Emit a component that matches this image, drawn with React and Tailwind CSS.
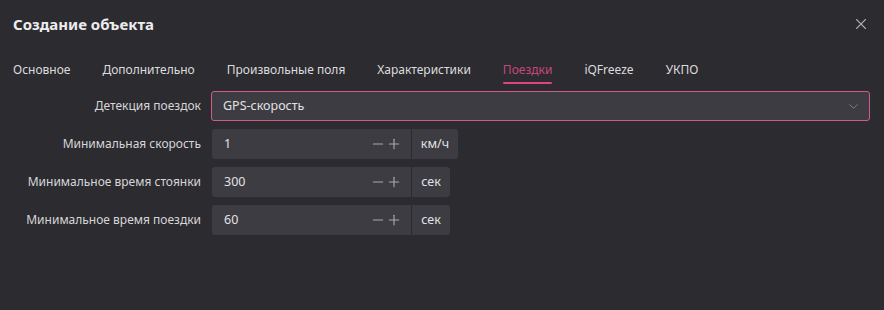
import { X, ChevronDown, Minus, Plus } from "lucide-react";

const tabs = ["Основное", "Дополнительно", "Произвольные поля", "Характеристики", "Поездки", "iQFreeze", "УКПО"];

const NumberRow = ({ label, value, unit, unitWidth }) => (
  <div className="flex items-center h-[30px]">
    <div className="w-[201px] text-right text-[12px] text-[#d6d6d8]">{label}</div>
    <div className="ml-[11px] flex h-[30px] rounded-[3px] bg-[#3d3c42] overflow-hidden">
      <div className="w-[199px] flex items-center pl-[12px] pr-[9px] text-[12.5px] text-[#e2e2e4]">
        <span className="flex-1">{value}</span>
        <Minus size={16} strokeWidth={1.7} className="text-[#a9a8ad]" />
        <Plus size={16} strokeWidth={1.7} className="text-[#a9a8ad]" />
      </div>
      <div
        className={`border-l border-[#2c2b31] flex items-center justify-center text-[12.5px] text-[#e2e2e4] ${unitWidth}`}
      >
        {unit}
      </div>
    </div>
  </div>
);

export default function App() {
  return (
    <div className="w-[884px] h-[310px] bg-[#2c2b30] font-['Noto_Sans',sans-serif] text-[#d6d6d8] overflow-hidden">
      <div className="flex items-center justify-between pl-[13px] pr-[14px] h-[48px]">
        <h1 className="text-[15px] font-bold text-[#ececee]">Создание объекта</h1>
        <X size={18} strokeWidth={1.5} className="text-[#a9a8ad]" />
      </div>
      <div className="flex pl-[13px] h-[37px] items-start pt-[13px] gap-[32px]">
        {tabs.map((t) => (
          <div key={t} className="flex flex-col items-center">
            <span className={`text-[12px] ${t === "Поездки" ? "text-[#c5487c]" : "text-[#dcdcde]"}`}>{t}</span>
            {t === "Поездки" && <div className="mt-[3px] h-[2px] w-full rounded bg-[#e2427f]" />}
          </div>
        ))}
      </div>
      <div className="flex flex-col gap-[8px] pt-[6px]">
        <div className="flex items-center h-[30px]">
          <div className="w-[201px] text-right text-[12px] text-[#d6d6d8]">Детекция поездок</div>
          <div className="ml-[10px] w-[659px] h-[30px] flex items-center justify-between rounded-[3px] border border-[#d35a8c] bg-[#3d3c42] pl-[11px] pr-[8px]">
            <span className="text-[12.5px] text-[#e2e2e4]">GPS-скорость</span>
            <ChevronDown size={15} strokeWidth={1.3} className="text-[#8e8d93]" />
          </div>
        </div>
        <NumberRow label="Минимальная скорость" value="1" unit="км/ч" unitWidth="w-[47px]" />
        <NumberRow label="Минимальное время стоянки" value="300" unit="сек" unitWidth="w-[39px]" />
        <NumberRow label="Минимальное время поездки" value="60" unit="сек" unitWidth="w-[39px]" />
      </div>
    </div>
  );
}
